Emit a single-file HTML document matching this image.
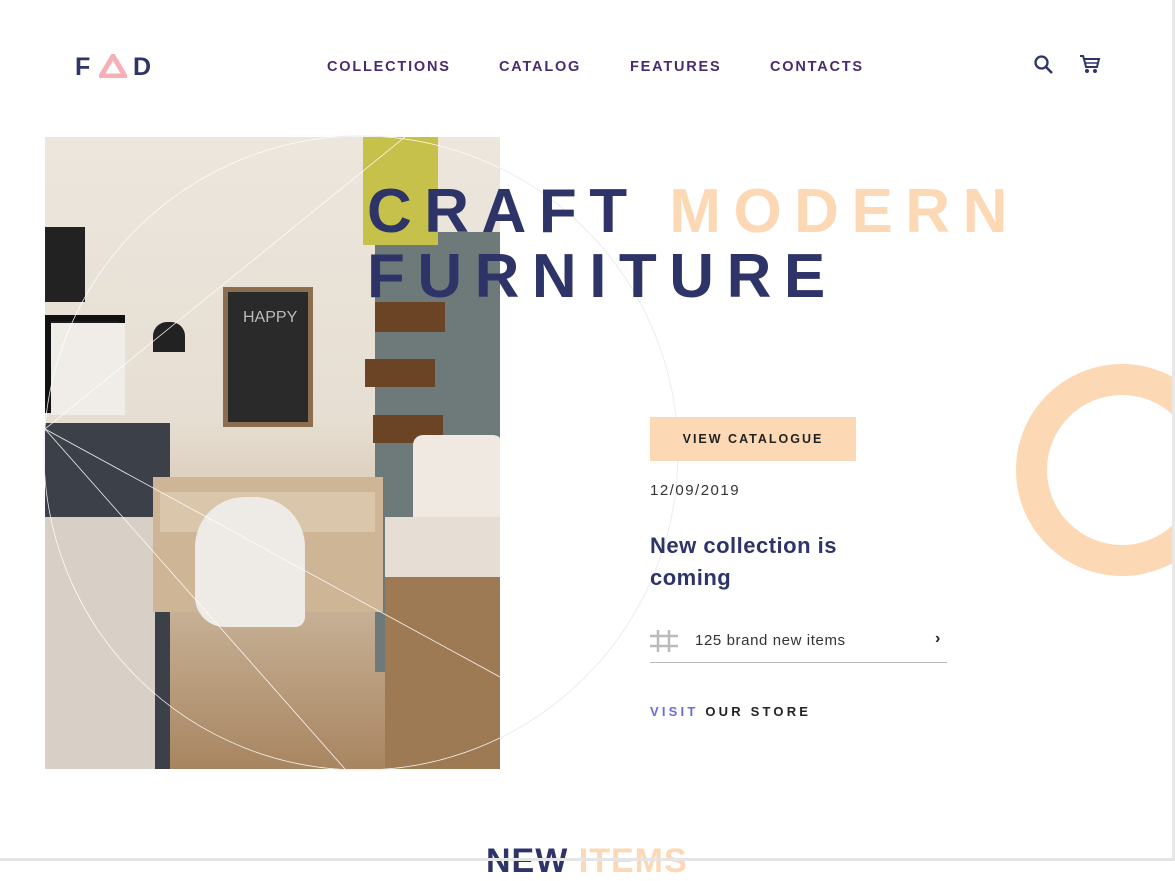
<!DOCTYPE html>
<html><head><meta charset="utf-8"><style>
*{margin:0;padding:0;box-sizing:border-box}
body{width:1175px;height:861px;overflow:hidden;background:#fff;font-family:"Liberation Sans",sans-serif;position:relative}
.a{position:absolute}
.nav{top:59px;font-size:14.5px;font-weight:bold;letter-spacing:1.8px;color:#4a2a6e}
.t{font-size:62px;font-weight:bold;letter-spacing:12.5px;color:#2e3468;line-height:1}
</style></head><body>
<!-- logo -->
<div class="a" style="left:75px;top:53px;font-size:25px;font-weight:bold;color:#2e3468;letter-spacing:2px">F</div>
<svg class="a" style="left:99px;top:54px" width="28" height="24"><polygon points="14,2 26,22 2,22" fill="none" stroke="#f6b0b5" stroke-width="5" stroke-linejoin="round"/></svg>
<div class="a" style="left:133px;top:53px;font-size:25px;font-weight:bold;color:#2e3468">D</div>
<div class="a nav" style="left:327px">COLLECTIONS</div>
<div class="a nav" style="left:499px">CATALOG</div>
<div class="a nav" style="left:630px">FEATURES</div>
<div class="a nav" style="left:770px">CONTACTS</div>
<svg class="a" style="left:1033px;top:54px" width="22" height="22"><circle cx="8.5" cy="8.5" r="6" fill="none" stroke="#2e3468" stroke-width="2.3"/><line x1="13" y1="13" x2="19" y2="19" stroke="#2e3468" stroke-width="2.5"/></svg>
<svg class="a" style="left:1079px;top:54px" width="22" height="22"><path d="M1 2h3l1 3h15l-2 8H7L5 5" fill="none" stroke="#2e3468" stroke-width="2"/><line x1="7" y1="9" x2="18" y2="9" stroke="#2e3468" stroke-width="1.5"/><circle cx="8" cy="17" r="2" fill="#2e3468"/><circle cx="16" cy="17" r="2" fill="#2e3468"/></svg>
<svg class="a" style="left:0;top:0" width="1175" height="861"><circle cx="361" cy="453" r="317" fill="none" stroke="#ececec" stroke-width="1"/></svg>
<!-- photo -->
<div class="a" style="left:45px;top:137px;width:455px;height:632px;overflow:hidden;background:linear-gradient(180deg,#ece6dd 0%,#e6ded2 45%,#cdb9a0 70%,#a88560 100%)">
 <div class="a" style="left:0;top:90px;width:40px;height:75px;background:#222"></div>
 <div class="a" style="left:0;top:178px;width:80px;height:98px;background:#1e1e1e;border:6px solid #111"></div>
 <div class="a" style="left:0;top:180px;width:74px;height:92px;background:#f0ede8;margin:6px"></div>
 <div class="a" style="left:0;top:286px;width:125px;height:360px;background:#3c4149"></div>
 <div class="a" style="left:0;top:380px;width:110px;height:260px;background:#d8d0c6"></div>
 <div class="a" style="left:178px;top:150px;width:90px;height:140px;background:#2a2a2a;border:5px solid #8a6e4f"></div>
 <div class="a" style="left:198px;top:172px;color:#bbb;font-size:16px">HAPPY</div>
 <div class="a" style="left:108px;top:185px;width:32px;height:30px;background:#222;border-radius:14px 14px 0 0"></div>
 <div class="a" style="left:330px;top:95px;width:125px;height:440px;background:#6e7a7a"></div>
 <div class="a" style="left:318px;top:0;width:75px;height:108px;background:#c6c14a"></div>
 <div class="a" style="left:330px;top:165px;width:70px;height:30px;background:#6b4426"></div>
 <div class="a" style="left:320px;top:222px;width:70px;height:28px;background:#6b4426"></div>
 <div class="a" style="left:328px;top:278px;width:70px;height:28px;background:#6b4426"></div>
 <div class="a" style="left:368px;top:298px;width:90px;height:110px;background:#efe9e2;border-radius:10px"></div>
 <div class="a" style="left:340px;top:380px;width:115px;height:80px;background:#e6ded4"></div>
 <div class="a" style="left:340px;top:440px;width:115px;height:200px;background:#9d7a54"></div>
 <div class="a" style="left:108px;top:340px;width:230px;height:135px;background:#cdb596"></div>
 <div class="a" style="left:115px;top:355px;width:215px;height:40px;background:#dac7ab"></div>
 <div class="a" style="left:150px;top:360px;width:110px;height:130px;background:#eeebe6;border-radius:50px 50px 10px 30px"></div>
 <svg class="a" style="left:0;top:0" width="455" height="632"><g stroke="#fff" stroke-width="0.8" fill="none" opacity=".9"><line x1="0" y1="292" x2="455" y2="540"/><line x1="0" y1="292" x2="360" y2="0"/><line x1="0" y1="292" x2="300" y2="632"/><circle cx="316" cy="316" r="317"/></g></svg>
</div>
<!-- title -->
<div class="a t" style="left:367px;top:181px">CRAFT <span style="color:#fdd8b5">MODERN</span></div>
<div class="a t" style="left:367px;top:246px">FURNITURE</div>
<!-- ring -->
<div class="a" style="left:1016px;top:364px;width:212px;height:212px;border-radius:50%;border:31px solid #fdd8b5"></div>
<!-- right content -->
<div class="a" style="left:650px;top:417px;width:206px;height:44px;background:#fdd8b5;font-size:12.5px;font-weight:bold;letter-spacing:2px;color:#222;text-align:center;line-height:44px">VIEW CATALOGUE</div>
<div class="a" style="left:650px;top:482px;font-size:15px;letter-spacing:1.5px;color:#333">12/09/2019</div>
<div class="a" style="left:650px;top:530px;font-size:22px;font-weight:bold;color:#2e3468;line-height:32px;letter-spacing:.5px">New collection is<br>coming</div>
<svg class="a" style="left:650px;top:630px" width="28" height="22"><g stroke="#bbb" stroke-width="2.5"><line x1="8" y1="0" x2="8" y2="22"/><line x1="19" y1="0" x2="19" y2="22"/><line x1="0" y1="6" x2="28" y2="6"/><line x1="0" y1="16" x2="28" y2="16"/></g></svg>
<div class="a" style="left:695px;top:632px;font-size:15px;letter-spacing:.6px;color:#333">125 brand new items</div>
<div class="a" style="left:935px;top:630px;font-size:16px;font-weight:bold;color:#222">›</div>
<div class="a" style="left:650px;top:662px;width:297px;height:1px;background:#bbb"></div>
<div class="a" style="left:650px;top:704px;font-size:13px;font-weight:bold;letter-spacing:3.2px;color:#222"><span style="color:#6d6ae0">VISIT</span> OUR STORE</div>
<div class="a" style="left:486px;top:842px;font-size:34px;font-weight:bold;color:#2e3468;letter-spacing:1px">NEW <span style="color:#fdd8b5">ITEMS</span></div>
<div class="a" style="left:1172px;top:0;width:3px;height:861px;background:#e8e8e8"></div>
<div class="a" style="left:0;top:858px;width:1175px;height:3px;background:#e5e5e5"></div>
</body></html>
